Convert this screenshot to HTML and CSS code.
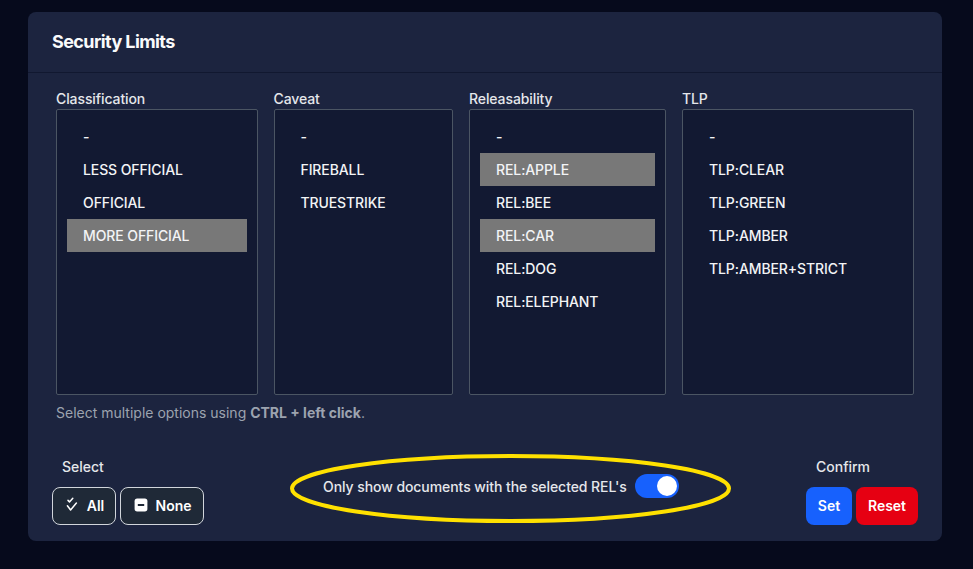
FILE: index.html
```html
<!DOCTYPE html>
<html lang="en">
<head>
    <meta charset="UTF-8">
    <meta name="viewport" content="width=device-width, initial-scale=1.0">
    <title>Security Limits</title>
    <link rel="stylesheet" href="styles.css">
</head>
<body>

<div class="card">
    <div class="card-header">Security Limits</div>
    <div class="card-body">
        <div class="lists">
            <div class="list-col">
                <label class="list-label">Classification</label>
                <div class="list-box">
                    <div class="option">-</div>
                    <div class="option">LESS OFFICIAL</div>
                    <div class="option">OFFICIAL</div>
                    <div class="option selected">MORE OFFICIAL</div>
                </div>
            </div>
            <div class="list-col">
                <label class="list-label">Caveat</label>
                <div class="list-box">
                    <div class="option">-</div>
                    <div class="option">FIREBALL</div>
                    <div class="option">TRUESTRIKE</div>
                </div>
            </div>
            <div class="list-col">
                <label class="list-label">Releasability</label>
                <div class="list-box">
                    <div class="option">-</div>
                    <div class="option selected">REL:APPLE</div>
                    <div class="option">REL:BEE</div>
                    <div class="option selected">REL:CAR</div>
                    <div class="option">REL:DOG</div>
                    <div class="option">REL:ELEPHANT</div>
                </div>
            </div>
            <div class="list-col">
                <label class="list-label">TLP</label>
                <div class="list-box">
                    <div class="option">-</div>
                    <div class="option">TLP:CLEAR</div>
                    <div class="option">TLP:GREEN</div>
                    <div class="option">TLP:AMBER</div>
                    <div class="option">TLP:AMBER+STRICT</div>
                </div>
            </div>
        </div>
        <p class="hint">Select multiple options using <strong>CTRL + left click</strong>.</p>

        <div class="footer">
            <div class="group">
                <div class="group-title select-title">Select</div>
                <div class="btn-row">
                    <button class="btn btn-outline btn-all">
                        <svg class="icon" viewBox="0 0 16 16" fill="none" stroke="#fff" stroke-width="1.5" stroke-linecap="round" stroke-linejoin="round">
                            <path d="M4 3.4l1.5 1.5L8.8 1.2"/>
                            <path d="M3.4 8.8l3.2 4.2 5.8-7"/>
                        </svg>
                        All
                    </button>
                    <button class="btn btn-outline btn-none">
                        <svg class="icon" viewBox="0 0 16 16">
                            <rect x="1.6" y="1.6" width="12.8" height="12.8" rx="2.6" fill="#fff"/>
                            <rect x="4.8" y="7" width="6.4" height="2" fill="#1f2937"/>
                        </svg>
                        None
                    </button>
                </div>
            </div>

            <div class="toggle-wrap">
                <span>Only show documents with the selected REL's</span>
                <span class="toggle"><span class="knob"></span></span>
                <!-- Yellow ring drawn over the screenshot -->
                <svg class="ring" viewBox="0 0 441 69" fill="none">
                    <ellipse cx="220.5" cy="34.5" rx="218.5" ry="32.5" stroke="#ffe100" stroke-width="4"/>
                </svg>
            </div>

            <div class="group">
                <div class="group-title confirm-title">Confirm</div>
                <div class="btn-row">
                    <button class="btn btn-blue">Set</button>
                    <button class="btn btn-red">Reset</button>
                </div>
            </div>
        </div>
    </div>
</div>

</body>
</html>
```

FILE: styles.css
```css
* {
    box-sizing: border-box;
}

body {
    margin: 0;
    height: 569px;
    overflow: hidden;
    padding: 12px 31px 0 28px;
    background-color: #060a1c;
    color: #f3f4f6;
    font-family: Inter, "Liberation Sans", sans-serif;
    font-size: 14px;
}

.card {
    height: 529px;
    background-color: #1c243f;
    border-radius: 8px;
}

.card-header {
    height: 61px;
    padding: 19px 24px 0;
    border-bottom: 1px solid #111830;
    font-size: 18px;
    line-height: 22px;
    font-weight: 700;
    letter-spacing: -0.6px;
    color: #f9fafb;
}

.card-body {
    padding: 17px 28px 0;
}

.lists {
    display: grid;
    grid-template-columns: 201.5px 179.5px 197px 232px;
    gap: 16px;
}

.list-label {
    display: block;
    height: 19px;
    line-height: 18px;
    color: #e5e7eb;
    font-weight: 500;
    letter-spacing: -0.1px;
}

.list-box {
    height: 286px;
    padding: 10px;
    background-color: #121932;
    border: 1px solid #4b5563;
    border-radius: 2px;
}

.option {
    height: 33px;
    padding-left: 16px;
    line-height: 33px;
    color: #f3f4f6;
    font-weight: 500;
    letter-spacing: -0.1px;
}

.option.selected {
    background-color: #787878;
}

.hint {
    margin: 9px 0 0;
    line-height: 18px;
    color: #9ca3af;
}

.hint strong {
    font-weight: 700;
}

.footer {
    display: flex;
    justify-content: space-between;
    align-items: flex-end;
    margin: 32px -4px 0;
}

.group-title {
    height: 20px;
    margin-bottom: 10px;
    line-height: 20px;
    font-weight: 500;
    color: #e5e7eb;
}

.select-title {
    padding-left: 10px;
}

.confirm-title {
    padding-left: 10px;
}

.btn-row {
    display: flex;
    gap: 4px;
}

.btn {
    display: flex;
    align-items: center;
    justify-content: center;
    gap: 7px;
    height: 38px;
    padding: 0 0 2px;
    border: none;
    border-radius: 8px;
    color: #fff;
    font-family: inherit;
    font-size: 14px;
    font-weight: 600;
}

.btn-outline {
    background-color: #1f2937;
    border: 1px solid #d1d5db;
}

.btn-all {
    width: 64px;
}

.btn-none {
    width: 84px;
}

.btn-blue {
    width: 46px;
    background-color: #1761fd;
}

.btn-red {
    width: 62px;
    background-color: #e60012;
}

.icon {
    width: 16px;
    height: 16px;
    flex: none;
}

.toggle-wrap {
    position: relative;
    display: flex;
    align-items: center;
    gap: 8px;
    width: 441px;
    height: 69px;
    padding: 0 0 5px 33px;
    margin: 0 0 2px 11px;
    color: #e5e7eb;
    font-weight: 500;
    letter-spacing: -0.07px;
}

.toggle {
    display: block;
    width: 44px;
    height: 24px;
    padding: 2px 2px 2px 22px;
    background-color: #1761fd;
    border-radius: 12px;
}

.knob {
    display: block;
    width: 20px;
    height: 20px;
    background-color: #fff;
    border-radius: 50%;
}

.ring {
    position: absolute;
    left: 0;
    top: 0;
    width: 441px;
    height: 69px;
}
```
